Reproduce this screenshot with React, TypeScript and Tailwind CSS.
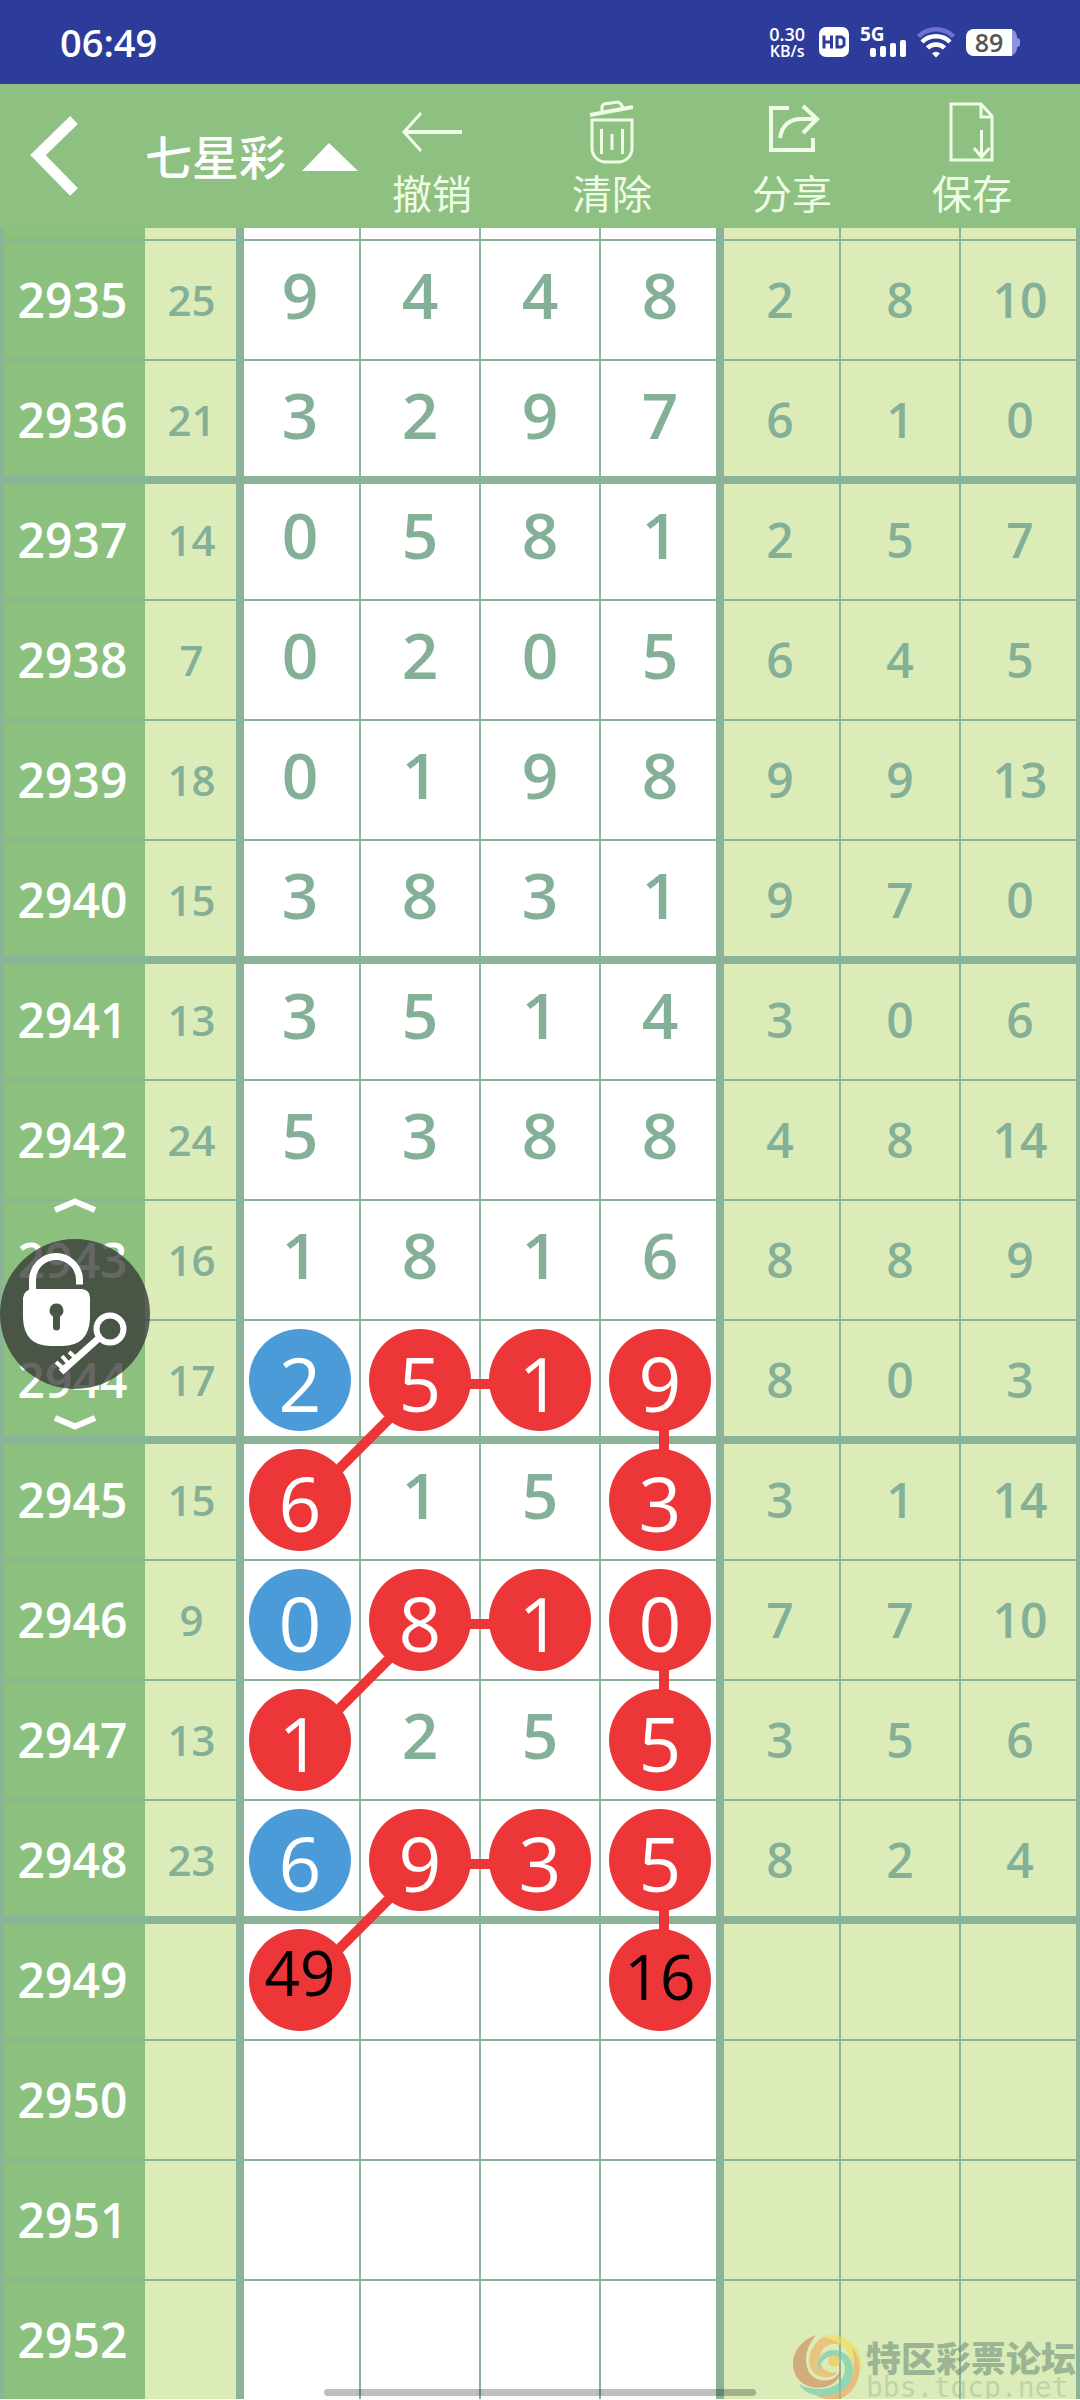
type Mark = 'red' | 'blue'

type DrawRow = {
   issue: number
   sum?: number
   main: (number | null)[]
   extra: (number | null)[]
   marks?: (Mark | null)[]
}

const EMPTY_MAIN = [null, null, null, null]
const EMPTY_EXTRA = [null, null, null]

const rows: DrawRow[] = [
   { issue: 2935, sum: 25, main: [9, 4, 4, 8], extra: [2, 8, 10] },
   { issue: 2936, sum: 21, main: [3, 2, 9, 7], extra: [6, 1, 0] },
   { issue: 2937, sum: 14, main: [0, 5, 8, 1], extra: [2, 5, 7] },
   { issue: 2938, sum: 7, main: [0, 2, 0, 5], extra: [6, 4, 5] },
   { issue: 2939, sum: 18, main: [0, 1, 9, 8], extra: [9, 9, 13] },
   { issue: 2940, sum: 15, main: [3, 8, 3, 1], extra: [9, 7, 0] },
   { issue: 2941, sum: 13, main: [3, 5, 1, 4], extra: [3, 0, 6] },
   { issue: 2942, sum: 24, main: [5, 3, 8, 8], extra: [4, 8, 14] },
   { issue: 2943, sum: 16, main: [1, 8, 1, 6], extra: [8, 8, 9] },
   { issue: 2944, sum: 17, main: [2, 5, 1, 9], extra: [8, 0, 3], marks: ['blue', 'red', 'red', 'red'] },
   { issue: 2945, sum: 15, main: [6, 1, 5, 3], extra: [3, 1, 14], marks: ['red', null, null, 'red'] },
   { issue: 2946, sum: 9, main: [0, 8, 1, 0], extra: [7, 7, 10], marks: ['blue', 'red', 'red', 'red'] },
   { issue: 2947, sum: 13, main: [1, 2, 5, 5], extra: [3, 5, 6], marks: ['red', null, null, 'red'] },
   { issue: 2948, sum: 23, main: [6, 9, 3, 5], extra: [8, 2, 4], marks: ['blue', 'red', 'red', 'red'] },
   { issue: 2949, main: EMPTY_MAIN, extra: EMPTY_EXTRA, marks: ['red', null, null, 'red'] },
   { issue: 2950, main: EMPTY_MAIN, extra: EMPTY_EXTRA },
   { issue: 2951, main: EMPTY_MAIN, extra: EMPTY_EXTRA },
   { issue: 2952, main: EMPTY_MAIN, extra: EMPTY_EXTRA }
]

// predictions written on the still empty balls of issue 2949
const guesses = [
   { text: '49', pad: 'pb-4' },
   null,
   null,
   { text: '16', pad: 'pb-2' }
]

// first row of every trend shape: it joins columns 1-3 and drops down in column 4
const linkRows = [9, 11, 13]

const mainCell = [
   'border-l-8 pr-[3px]',
   'border-l-2',
   'border-l-2',
   'border-l-2 pl-[3px]'
]

const extraCell = [
   'border-l-8 pr-[3px]',
   'border-l-2',
   'border-l-2 border-r-4 pl-[3px]'
]

const LINE = 'border-[#8ab398]'

// a thick rule opens each group of four issues
function rowClass(issue: number) {
   if (issue % 4 === 1 && issue > 2935) return { height: 'h-[123px]', cell: 'border-t-8 pb-[3px]' }
   if (issue % 4 === 0 && issue < 2952) return { height: 'h-[117px]', cell: 'border-t-2 pt-[3px]' }
   return { height: 'h-[120px]', cell: 'border-t-2' }
}

function StatusBar() {
   return (
      <div className="flex h-[84px] items-center bg-[#2d3c9b] pr-[60px] pl-[60px] text-white">
         <time className="flex-1 text-[38px] leading-none font-semibold">06:49</time>
         <div className="flex items-center gap-[11px]">
            <div className="flex flex-col items-center pr-[3px] font-semibold">
               <span className="text-[18px] leading-[18px]">0.30</span>
               <span className="text-[16px] leading-[16px]">KB/s</span>
            </div>
            <svg className="h-[30px] w-[30px]" viewBox="0 0 30 30" role="img" aria-label="HD">
               <rect width="30" height="30" rx="7" fill="#fff" />
               <path d="M5 8.500v13M12.500 8.500v13M5 15h7M18 8.500v13M16.500 10h6l2.500 2v6l-2.500 2h-6" fill="none" stroke="#2d3c9b" strokeWidth="3" />
            </svg>
            <div className="relative h-[30px] w-[46px]">
               <span className="absolute top-0 left-0 text-[19px] leading-[15px] font-bold">5G</span>
               <svg className="absolute right-0 bottom-0 h-[17px] w-9" viewBox="0 0 36 17" fill="#fff">
                  <rect x="0" y="8" width="6" height="9" rx="2" />
                  <rect x="10" y="6" width="6" height="11" rx="2" />
                  <rect x="20" y="3" width="6" height="14" rx="2" />
                  <rect x="30" y="0" width="6" height="17" rx="2" />
               </svg>
            </div>
            <svg className="h-[31px] w-[38px]" viewBox="0 0 38 31" fill="none" strokeWidth="4.500">
               <path d="M1.500 9.500a25 25 0 0 1 35 0" stroke="#6d72cf" />
               <path d="M5 15a20 20 0 0 1 28 0" stroke="#fff" />
               <path d="M10.500 21a12 12 0 0 1 17 0" stroke="#fff" />
               <path d="M15 26.500a5.500 5.500 0 0 1 8 0l-4 4z" fill="#fff" />
            </svg>
            <div className="flex items-center">
               <div className="flex h-[27px] w-[51px] rounded-lg bg-[#8f93dc]">
                  <span className="flex w-[46px] items-center justify-center rounded-l-lg bg-white text-[25px] leading-none font-semibold text-[#555]">89</span>
               </div>
               <span className="h-[9px] w-[3px] rounded-r bg-[#8f93dc]" />
            </div>
         </div>
      </div>
   )
}

function UndoIcon() {
   return (
      <svg className="h-16 w-16" viewBox="0 0 64 64" fill="none" stroke="#effde6" strokeWidth="3">
         <path d="M62 32H3" strokeWidth="4" />
         <path d="M21 13L4 32l17 19" />
      </svg>
   )
}

function TrashIcon() {
   return (
      <svg className="h-16 w-16" viewBox="0 0 64 64" fill="none" stroke="#effde6" strokeWidth="3">
         <path d="M10 15L53 7" strokeWidth="4" />
         <path d="M22 12V6l2-2 14-2 3 2 2 4" />
         <path d="M12 20h40v28c0 8-6 14-14 14H26c-8 0-14-6-14-14z" />
         <path d="M21.500 29v25M32 34v16M42.500 29v25" />
      </svg>
   )
}

function ShareIcon() {
   return (
      <svg className="h-16 w-16" viewBox="0 0 64 64" fill="none" stroke="#effde6" strokeWidth="4">
         <path d="M29 8H11v42h42V38" />
         <path d="M20 38c2-13 10-19 22-19h14" />
         <path d="M43 6l14 13-14 14" />
      </svg>
   )
}

function SaveIcon() {
   return (
      <svg className="h-16 w-16" viewBox="0 0 64 64" fill="none" stroke="#effde6" strokeWidth="3">
         <path d="M41 4H11v56h41V16z" />
         <path d="M41 4v13h12" />
         <path d="M41.500 30v28M34 48l7.500 9 8-9" />
      </svg>
   )
}

const actions = [
   { label: '撤销', Icon: UndoIcon },
   { label: '清除', Icon: TrashIcon },
   { label: '分享', Icon: ShareIcon },
   { label: '保存', Icon: SaveIcon }
]

function Toolbar() {
   return (
      <header className="flex h-36 items-stretch bg-[#8dc081] text-white">
         <button type="button" aria-label="返回" className="flex w-[145px] cursor-pointer items-center pl-[30px]">
            <svg className="h-20 w-12" viewBox="0 0 48 80" fill="none" stroke="#fff" strokeWidth="11">
               <path d="M44 4L8 39l36 37" />
            </svg>
         </button>
         <button type="button" className="flex min-w-0 flex-1 cursor-pointer items-center gap-4 pt-0.5 text-[47px] leading-none font-medium whitespace-nowrap">
            七星彩
            <svg className="h-7 w-14 shrink-0" viewBox="0 0 56 28">
               <path d="M0 28L27 0l29 28z" fill="#fff" />
            </svg>
         </button>
         {actions.map(({ label, Icon }) => (
            <button
               key={label}
               type="button"
               className="flex w-1/6 cursor-pointer flex-col items-center pt-4 text-[40px] leading-[60px] text-[#effde6]"
            >
               <Icon />
               {label}
            </button>
         ))}
         <span className="w-[18px]" />
      </header>
   )
}

function MainValue({ value, mark, guess }: { value: number | null, mark?: Mark | null, guess?: { text: string, pad: string } | null }) {
   if (mark && value === null) return (
      <span className={`relative z-10 mx-auto flex size-[102px] items-center justify-center rounded-full bg-[#ec3638] text-[62px] leading-none font-normal text-black ${guess?.pad}`}>
         {guess?.text}
      </span>
   )

   if (mark) return (
      <span className={`relative z-10 mx-auto flex size-[102px] items-center justify-center rounded-full pt-1.5 text-[75px] leading-none font-normal text-white ${mark === 'red' ? 'bg-[#ec3638]' : 'bg-[#4b9bd8]'}`}>
         {value}
      </span>
   )

   return <span className="block pb-2.5 text-[64px] leading-none">{value}</span>
}

function TrendLines() {
   // x is a share of the 1080 unit wide table, y counts from the top of the table
   const x = (v: number) => `${v / 10.8}%`

   return (
      <svg className="pointer-events-none absolute inset-0 h-full w-full" stroke="#ec3638" strokeWidth="10">
         {linkRows.map(r => {
            const y = r * 120 + 76
            return (
               <g key={r}>
                  <line x1={x(424)} y1={y} x2={x(544)} y2={y} />
                  <line x1={x(424)} y1={y} x2={x(304)} y2={y + 120} />
                  <line x1={x(664)} y1={y} x2={x(664)} y2={y + 120} />
               </g>
            )
         })}
      </svg>
   )
}

function TrendTable() {
   return (
      <div className="relative">
         <table className="w-full table-fixed border-separate border-spacing-0 text-center font-semibold text-[#83b097]">
            <colgroup>
               <col className="w-[145px]" />
               <col className="w-[91px]" />
               <col className="w-[123px]" />
               <col className="w-[120px]" />
               <col className="w-[120px]" />
               <col className="w-[117px]" />
               <col className="w-[123px]" />
               <col className="w-[120px]" />
               <col className="w-[121px]" />
            </colgroup>
            <tbody>
               {/* tail of the row scrolled under the toolbar */}
               <tr className="h-[11px]" aria-hidden="true">
                  <td className={`border-l-4 bg-[#8bc07f] ${LINE}`} />
                  <td className="bg-[#dcecb9]" />
                  {mainCell.map((c, i) => <td key={i} className={`bg-white ${LINE} ${c}`} />)}
                  {extraCell.map((c, i) => <td key={i} className={`bg-[#dcecb9] ${LINE} ${c}`} />)}
               </tr>
               {rows.map(row => {
                  const rc = rowClass(row.issue)
                  return (
                     <tr key={row.issue} className={rc.height}>
                        <th scope="row" className={`border-l-4 bg-[#8bc07f] pr-1 text-[48px] leading-none font-semibold text-white ${LINE} ${rc.cell}`}>
                           {row.issue}
                        </th>
                        <td className={`bg-[#dcecb9] pl-0.5 text-[42px] leading-none ${LINE} ${rc.cell}`}>{row.sum}</td>
                        {row.main.map((v, i) => (
                           <td key={i} className={`bg-white ${LINE} ${rc.cell} ${mainCell[i]}`}>
                              <MainValue value={v} mark={row.marks?.[i]} guess={guesses[i]} />
                           </td>
                        ))}
                        {row.extra.map((v, i) => (
                           <td key={i} className={`bg-[#dcecb9] text-[48px] leading-none ${LINE} ${rc.cell} ${extraCell[i]}`}>{v}</td>
                        ))}
                     </tr>
                  )
               })}
            </tbody>
         </table>
         <TrendLines />
      </div>
   )
}

function LockButton() {
   return (
      <div className="absolute top-[1198px] left-0 z-20 flex w-[150px] flex-col items-center gap-[26px]">
         <svg className="h-[15px] w-[42px]" viewBox="0 0 42 15" fill="none" stroke="#fff" strokeWidth="6">
            <path d="M1 12L21 3.500l20 8.500" />
         </svg>
         <button type="button" aria-label="解锁" className="size-[150px] cursor-pointer rounded-full bg-[#333]/75">
            <svg viewBox="0 0 150 150" fill="none" stroke="#fff">
               <path d="M32.500 53V41a23.500 23.500 0 0 1 47 0v4.500" strokeWidth="7" />
               <path
                  fillRule="evenodd"
                  fill="#fff"
                  stroke="none"
                  d="M32 50h50q8 1 8 9v20q-1 28-28 28H51Q24 107 23 79V59q1-8 9-9zM56.500 64.500a7 7 0 0 0-3.500 13V88q0 3.500 3.500 3.500T60 88V77.500a7 7 0 0 0-3.500-13z"
               />
               <circle cx="110" cy="90" r="13.500" strokeWidth="6" />
               <path d="M99 99L61 133" strokeWidth="7" />
               <path d="M65 131l-9-8M68 124l-6-7M76 119l-7-6" strokeWidth="4" />
            </svg>
         </button>
         <svg className="h-[15px] w-[42px]" viewBox="0 0 42 15" fill="none" stroke="#fff" strokeWidth="6">
            <path d="M1 3l20 8.500L41 3" />
         </svg>
      </div>
   )
}

function Watermark() {
   return (
      <div className="pointer-events-none absolute right-0 bottom-0 z-20 flex w-[288px] items-start gap-1">
         <svg className="h-16 w-[70px] shrink-0" viewBox="0 0 70 64" opacity="0.65">
            <path d="M24 0C6 6-2 22 2 36c4 14 20 20 34 15 8-3 13-9 13-16-4 9-14 13-24 9C11 38 10 16 24 0z" fill="#cf8a5c" />
            <path d="M26 6C14 18 14 36 27 41c8 3 15 1 19-4-7 2-15-1-17-8-3-10 2-20 13-20 14 0 19 14 17 24 6-14 0-28-14-32-8-2-14 0-19 5z" fill="#efb05f" />
            <path d="M30 2C46-4 66 6 69 24c2 16-8 30-20 35 10-10 14-24 9-36C54 10 42 4 30 2z" fill="#f0df55" />
            <path d="M60 12c12 16 10 38-8 50-10 4-20 3-27-1 16 1 30-5 35-20 3-10 3-19 0-29z" fill="#e9a563" />
            <path d="M27 38c-4-12 3-23 15-23 14 0 22 14 18 27-5 14-19 21-34 19-10-2-17-7-19-12 15 8 37 7 44-7 5-10 0-20-9-21-9 0-15 7-15 17z" fill="#6fcbb0" />
            <circle cx="42" cy="26" r="6" fill="#f3c64c" />
         </svg>
         <div className="pt-1.5 whitespace-nowrap">
            <p className="text-[35px] leading-[36px] font-black text-[#6f8f7b]/60">特区彩票论坛</p>
            <p className="font-['DejaVu_Sans_Mono',monospace] text-[28px] leading-[22px] text-[#8fa88c]/40">bbs.tqcp.net</p>
         </div>
      </div>
   )
}

export default function App() {
   return (
      <div className="relative overflow-hidden bg-white font-['Open_Sans','Noto_Sans_CJK_SC',sans-serif]">
         <StatusBar />
         <Toolbar />
         <main>
            <TrendTable />
         </main>
         <LockButton />
         <Watermark />
         <div className="absolute inset-x-[30%] bottom-[3px] z-20 h-[7px] rounded-full bg-black/25" />
      </div>
   )
}
